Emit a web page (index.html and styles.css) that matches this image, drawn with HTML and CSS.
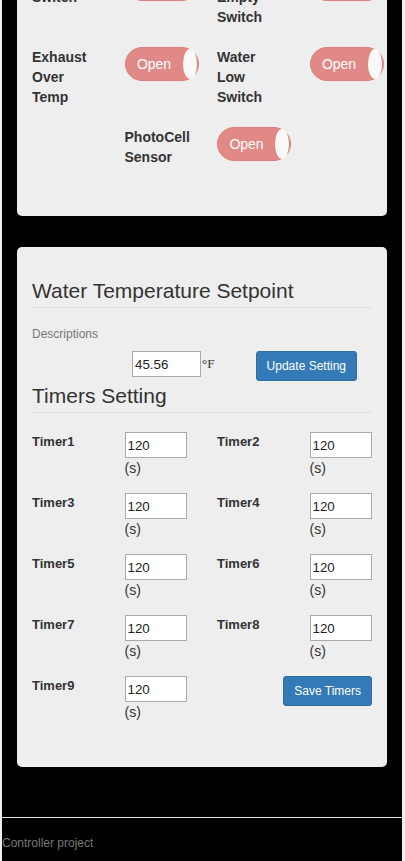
FILE: index.html
```html
<!DOCTYPE html>
<html lang="en">
<head>
<meta charset="UTF-8" />
<meta name="viewport" content="width=device-width, initial-scale=1" />
<title>Controller</title>
<link rel="stylesheet" href="styles.css">
</head>
<body>

<div class="page">

  <!-- Switch status -->
  <div class="panel panel-status">
    <div class="grid4 switch-grid">
      <div class="sw-label">Flow Switch</div>
      <div><span class="toggle"><span class="toggle-text">Open</span><span class="toggle-knob"></span></span></div>
      <div class="sw-label">Tank Empty Switch</div>
      <div><span class="toggle"><span class="toggle-text">Open</span><span class="toggle-knob"></span></span></div>

      <div class="sw-label">Exhaust Over Temp</div>
      <div><span class="toggle"><span class="toggle-text">Open</span><span class="toggle-knob"></span></span></div>
      <div class="sw-label">Water Low Switch</div>
      <div><span class="toggle"><span class="toggle-text">Open</span><span class="toggle-knob"></span></span></div>

      <div class="sw-label sw-offset">PhotoCell Sensor</div>
      <div><span class="toggle"><span class="toggle-text">Open</span><span class="toggle-knob"></span></span></div>
    </div>
  </div>

  <!-- Settings -->
  <div class="panel panel-settings">
    <h3 class="section-title">Water Temperature Setpoint</h3>
    <p class="desc">Descriptions</p>
    <div class="setpoint-row">
      <span class="setpoint-field"><input type="text" class="setpoint-input" value="45.56" /><span class="unit">&deg;F</span></span>
      <button class="btn btn-update">Update Setting</button>
    </div>

    <h3 class="section-title timers-title">Timers Setting</h3>
    <div class="grid4 timer-grid">
      <div class="timer-label">Timer1</div>
      <div><input type="text" class="timer-input" value="120" /><div class="timer-unit">(s)</div></div>
      <div class="timer-label">Timer2</div>
      <div><input type="text" class="timer-input" value="120" /><div class="timer-unit">(s)</div></div>

      <div class="timer-label">Timer3</div>
      <div><input type="text" class="timer-input" value="120" /><div class="timer-unit">(s)</div></div>
      <div class="timer-label">Timer4</div>
      <div><input type="text" class="timer-input" value="120" /><div class="timer-unit">(s)</div></div>

      <div class="timer-label">Timer5</div>
      <div><input type="text" class="timer-input" value="120" /><div class="timer-unit">(s)</div></div>
      <div class="timer-label">Timer6</div>
      <div><input type="text" class="timer-input" value="120" /><div class="timer-unit">(s)</div></div>

      <div class="timer-label">Timer7</div>
      <div><input type="text" class="timer-input" value="120" /><div class="timer-unit">(s)</div></div>
      <div class="timer-label">Timer8</div>
      <div><input type="text" class="timer-input" value="120" /><div class="timer-unit">(s)</div></div>

      <div class="timer-label">Timer9</div>
      <div><input type="text" class="timer-input" value="120" /><div class="timer-unit">(s)</div></div>
      <div class="timer-save"><button class="btn">Save Timers</button></div>
    </div>
  </div>

  <!-- Footer -->
  <div class="footer">Controller project</div>

</div>

</body>
</html>
```

FILE: styles.css
```css
/* Reset & base */
html, body {
  margin: 0;
  padding: 0;
}
body {
  background: #eee;
  font-family: "Liberation Sans", Arial, Helvetica, sans-serif;
  font-size: 14px;
  line-height: 20px;
  color: #333;
}
.page {
  display: flow-root;
  width: 400px;
  margin-left: 2px;
  background: #000;
}

/* Panels */
.panel {
  background: #eee;
  border-radius: 5px;
  margin: 0 15px;
  padding: 15px;
}
.panel-status {
  margin-top: -48px;
  padding-bottom: 49px;
}
.panel-settings {
  margin-top: 31px;
  padding-top: 32px;
  padding-bottom: 45px;
}

/* 4 column grid */
.grid4 {
  display: grid;
  grid-template-columns: repeat(4, 62.5px);
  column-gap: 30px;
  align-items: start;
}

/* Switches */
.switch-grid {
  row-gap: 20px;
}
.sw-label {
  font-weight: bold;
}
.sw-offset {
  grid-column: 2;
}
.toggle {
  display: flex;
  align-items: center;
  width: 74px;
  height: 34px;
  box-sizing: border-box;
  border: 1px solid #dc807d;
  border-radius: 17px;
  background: #e08986;
  color: #fff;
}
.toggle-text {
  flex: 1;
  text-align: center;
}
.toggle-knob {
  width: 14px;
  height: 30px;
  margin-right: 1px;
  border-radius: 50%;
  background: #f9f9f9;
}

/* Headings */
.section-title {
  margin: 0 0 16px;
  padding-bottom: 5px;
  border-bottom: 1px solid #e0e0e0;
  font-size: 21px;
  line-height: 23px;
  font-weight: normal;
}
.timers-title {
  margin-bottom: 19px;
}
.desc {
  margin: 0 0 7px;
  font-size: 12px;
  color: #777;
}

/* Inputs & buttons */
input {
  box-sizing: border-box;
  height: 26px;
  padding: 1px 2px;
  border: 1px solid #a9a9a9;
  background: #fff;
  color: #222;
  font-family: "Liberation Sans", Arial, sans-serif;
  font-size: 13.333px;
}
.setpoint-input {
  width: 69px;
}
.timer-input {
  display: block;
  width: 62px;
}
.btn {
  padding: 5px 10px;
  border: 1px solid #2e6da4;
  border-radius: 3px;
  background: #337ab7;
  color: #fff;
  font-family: inherit;
  font-size: 12px;
  line-height: 18px;
}

/* Setpoint row */
.setpoint-row {
  display: flex;
  align-items: flex-start;
  margin-bottom: 3px;
}
.setpoint-field {
  display: flex;
  margin-left: 100px;
}
.unit {
  margin-left: 1px;
  font-family: "Liberation Serif", "Times New Roman", serif;
  font-size: 13px;
  line-height: 26px;
}
.btn-update {
  margin-left: auto;
  margin-right: 15px;
}

/* Timers */
.timer-grid {
  row-gap: 15px;
}
.timer-label {
  font-weight: bold;
  font-size: 13px;
}
.timer-save {
  grid-column: 3 / 5;
  justify-self: end;
}

/* Footer */
.footer {
  margin-top: 50px;
  padding: 15px 0 8px;
  border-top: 1px solid #e5e5e5;
  font-size: 12px;
  color: #777;
}
```
